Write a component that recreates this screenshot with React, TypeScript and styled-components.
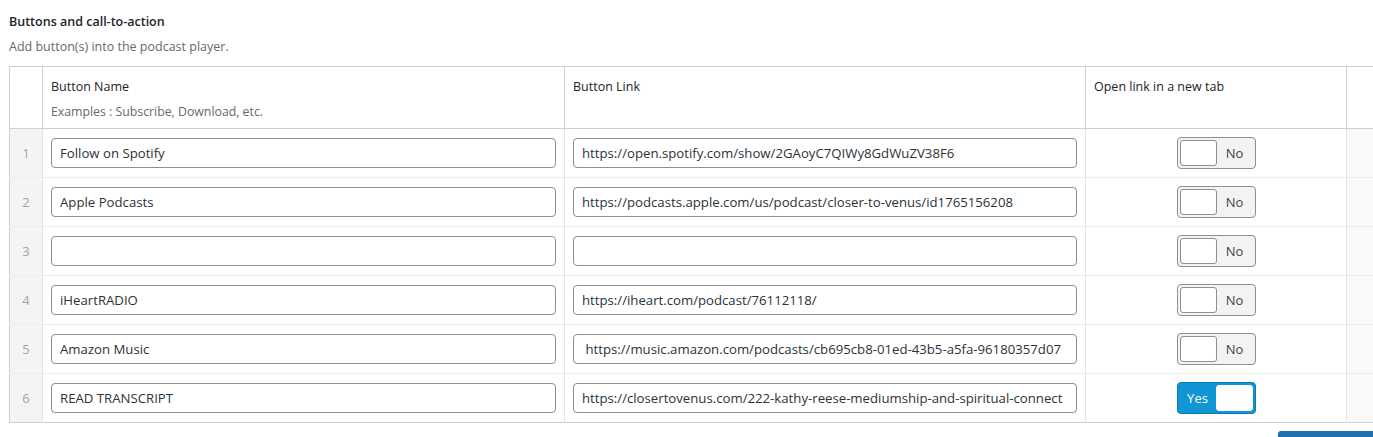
import React from "react";
import styled, { createGlobalStyle } from "styled-components";

const Global = createGlobalStyle`
  html, body { margin: 0; padding: 0; background: #fff; overflow: hidden; }
  body { font-family: "Segoe UI", "Open Sans", "Noto Sans", sans-serif; color: #1d2327; }
`;

const Page = styled.div`
  width: 1400px;
  padding: 14px 9px 0;
`;

const Title = styled.h3`
  margin: 0;
  font-size: 12.5px;
  font-weight: 600;
  line-height: 16px;
  color: #1d2327;
`;

const Subtitle = styled.p`
  margin: 9px 0 11px;
  font-size: 12.5px;
  line-height: 16px;
  color: #646970;
`;

const Table = styled.table`
  width: 1400px;
  border-collapse: collapse;
  border: 1px solid #ccd0d4;
  table-layout: fixed;
  font-size: 13px;
`;

const HeadCell = styled.th<{ $w: number }>`
  box-sizing: border-box;
  width: ${(p) => p.$w}px;
  text-align: left;
  font-weight: 400;
  vertical-align: top;
  padding: 11px 8px 0;
  height: 62px;
  border-left: 1px solid #ccd0d4;
  border-bottom: 1px solid #ccd0d4;
  color: #1d2327;
`;

const HeadLabel = styled.div`
  font-size: 12.5px;
  line-height: 18px;
`;

const HeadHint = styled.div`
  margin-top: 8px;
  font-size: 12.3px;
  line-height: 16px;
  color: #646970;
`;

const Row = styled.tr`
  height: 49px;
  & + & td { border-top: 1px solid #ececec; }
`;

const NumCell = styled.td`
  background: #f4f4f4;
  color: #a0a5aa;
  text-align: center;
  font-size: 13px;
  padding: 0;
`;

const Cell = styled.td<{ $center?: boolean; $grey?: boolean }>`
  border-left: 1px solid #e3e3e3;
  padding: 0 8px;
  text-align: ${(p) => (p.$center ? "center" : "left")};
  background: ${(p) => (p.$grey ? "#f9f9f9" : "#fff")};
  vertical-align: middle;
`;

const Input = styled.input`
  box-sizing: border-box;
  display: block;
  width: 100%;
  height: 30px;
  border: 1px solid #8c8f94;
  border-radius: 4px;
  padding: 0 8px;
  font-family: "Segoe UI", "Open Sans", "Noto Sans", sans-serif;
  font-size: 13.2px;
  color: #2c3338;
  background: #fff;
  outline: none;
`;

const Toggle = styled.span<{ $on: boolean }>`
  box-sizing: border-box;
  display: inline-flex;
  flex-direction: ${(p) => (p.$on ? "row-reverse" : "row")};
  align-items: center;
  width: 79px;
  height: 32px;
  padding: 2px;
  border: 1px solid ${(p) => (p.$on ? "#0a79b7" : "#8c8f94")};
  border-radius: 4px;
  background: ${(p) => (p.$on ? "#1195d3" : "#f3f3f3")};
  vertical-align: middle;
`;

const Knob = styled.span<{ $on: boolean }>`
  box-sizing: border-box;
  width: 37px;
  height: 26px;
  background: #fff;
  border: 1px solid ${(p) => (p.$on ? "#ffffff" : "#8c8f94")};
  border-radius: 3px;
`;

const ToggleText = styled.span<{ $on: boolean }>`
  flex: 1;
  text-align: center;
  font-size: 13px;
  color: ${(p) => (p.$on ? "#fff" : "#3c434a")};
`;

const Footer = styled.div`
  display: flex;
  justify-content: flex-end;
  margin-top: 8px;
`;

const SaveButton = styled.button`
  width: 131px;
  height: 48px;
  padding-top: 26px;
  border: 0;
  border-radius: 3px;
  background: #2271b1;
  color: #fff;
  font-size: 13px;
`;

const rows = [
  { name: "Follow on Spotify", link: "https://open.spotify.com/show/2GAoyC7QIWy8GdWuZV38F6", on: false },
  { name: "Apple Podcasts", link: "https://podcasts.apple.com/us/podcast/closer-to-venus/id1765156208", on: false },
  { name: "", link: "", on: false },
  { name: "iHeartRADIO", link: "https://iheart.com/podcast/76112118/", on: false },
  { name: "Amazon Music", link: " https://music.amazon.com/podcasts/cb695cb8-01ed-43b5-a5fa-96180357d07", on: false },
  { name: "READ TRANSCRIPT", link: "https://closertovenus.com/222-kathy-reese-mediumship-and-spiritual-connect", on: true },
];

export default function App() {
  return (
    <>
      <Global />
      <Page>
        <Title>Buttons and call-to-action</Title>
        <Subtitle>Add button(s) into the podcast player.</Subtitle>
        <Table>
          <thead>
            <tr>
              <HeadCell $w={33} style={{ borderLeft: 0 }} />
              <HeadCell $w={522}>
                <HeadLabel>Button Name</HeadLabel>
                <HeadHint>Examples : Subscribe, Download, etc.</HeadHint>
              </HeadCell>
              <HeadCell $w={521}>
                <HeadLabel>Button Link</HeadLabel>
              </HeadCell>
              <HeadCell $w={261}>
                <HeadLabel>Open link in a new tab</HeadLabel>
              </HeadCell>
              <HeadCell $w={63} />
            </tr>
          </thead>
          <tbody>
            {rows.map((r, i) => (
              <Row key={i}>
                <NumCell>{i + 1}</NumCell>
                <Cell>
                  <Input readOnly value={r.name} />
                </Cell>
                <Cell>
                  <Input readOnly value={r.link} />
                </Cell>
                <Cell $center>
                  <Toggle $on={r.on}>
                    <Knob $on={r.on} />
                    <ToggleText $on={r.on}>{r.on ? "Yes" : "No"}</ToggleText>
                  </Toggle>
                </Cell>
                <Cell $grey />
              </Row>
            ))}
          </tbody>
        </Table>
        <Footer>
          <SaveButton>Save Changes</SaveButton>
        </Footer>
      </Page>
    </>
  );
}
